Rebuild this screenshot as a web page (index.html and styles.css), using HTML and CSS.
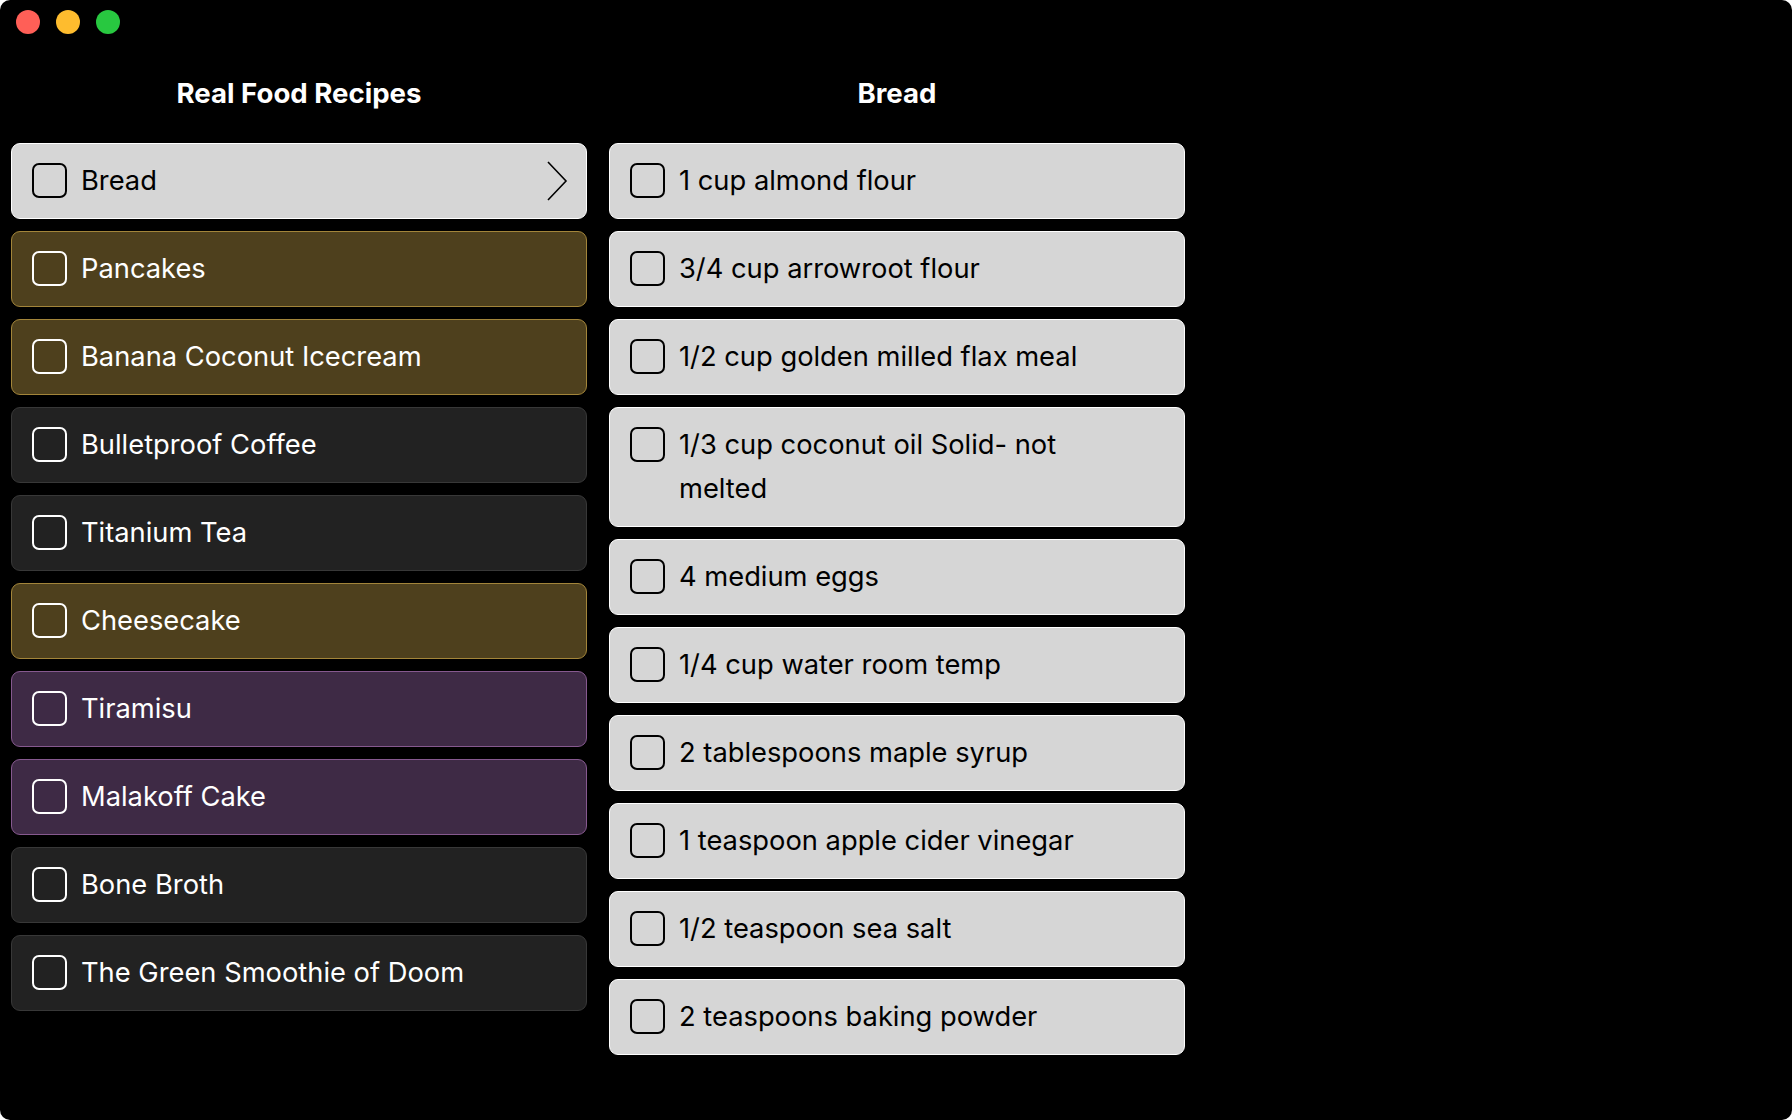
FILE: index.html
```html
<!DOCTYPE html>
<html lang="en">
<head>
    <meta charset="UTF-8">
    <meta name="viewport" content="width=device-width, initial-scale=1.0">
    <title>Real Food Recipes</title>
    <link rel="stylesheet" href="styles.css">
</head>
<body>
    <div class="window">
        <div class="titlebar">
            <span class="light light-red"></span>
            <span class="light light-yellow"></span>
            <span class="light light-green"></span>
        </div>
        <div class="columns">
            <section class="column">
                <h2 class="column-title">Real Food Recipes</h2>
                <ul class="list">
                    <li class="item item-light">
                        <span class="check"></span>
                        <span class="label">Bread</span>
                        <svg class="chevron" width="22" height="40" viewBox="0 0 22 40"><path d="M2 1 L20 20 L2 39" fill="none" stroke="#000" stroke-width="1.6"/></svg>
                    </li>
                    <li class="item item-gold"><span class="check"></span><span class="label">Pancakes</span></li>
                    <li class="item item-gold"><span class="check"></span><span class="label">Banana Coconut Icecream</span></li>
                    <li class="item item-dark"><span class="check"></span><span class="label">Bulletproof Coffee</span></li>
                    <li class="item item-dark"><span class="check"></span><span class="label">Titanium Tea</span></li>
                    <li class="item item-gold"><span class="check"></span><span class="label">Cheesecake</span></li>
                    <li class="item item-purple"><span class="check"></span><span class="label">Tiramisu</span></li>
                    <li class="item item-purple"><span class="check"></span><span class="label">Malakoff Cake</span></li>
                    <li class="item item-dark"><span class="check"></span><span class="label">Bone Broth</span></li>
                    <li class="item item-dark"><span class="check"></span><span class="label">The Green Smoothie of Doom</span></li>
                </ul>
            </section>
            <section class="column">
                <h2 class="column-title">Bread</h2>
                <ul class="list">
                    <li class="item item-light"><span class="check"></span><span class="label">1 cup almond flour</span></li>
                    <li class="item item-light"><span class="check"></span><span class="label">3/4 cup arrowroot flour</span></li>
                    <li class="item item-light"><span class="check"></span><span class="label">1/2 cup golden milled flax meal</span></li>
                    <li class="item item-light"><span class="check"></span><span class="label label-wrap">1/3 cup coconut oil Solid- not melted</span></li>
                    <li class="item item-light"><span class="check"></span><span class="label">4 medium eggs</span></li>
                    <li class="item item-light"><span class="check"></span><span class="label">1/4 cup water room temp</span></li>
                    <li class="item item-light"><span class="check"></span><span class="label">2 tablespoons maple syrup</span></li>
                    <li class="item item-light"><span class="check"></span><span class="label">1 teaspoon apple cider vinegar</span></li>
                    <li class="item item-light"><span class="check"></span><span class="label">1/2 teaspoon sea salt</span></li>
                    <li class="item item-light"><span class="check"></span><span class="label">2 teaspoons baking powder</span></li>
                </ul>
            </section>
        </div>
    </div>
</body>
</html>
```

FILE: styles.css
```css
html, body {
    margin: 0;
    padding: 0;
    background: #fff;
}
body {
    font-family: Inter, "Noto Sans", sans-serif;
}
.window {
    width: 1792px;
    height: 1120px;
    background: #000;
    border-radius: 10px;
    overflow: hidden;
}
.titlebar {
    height: 44px;
    display: flex;
    align-items: center;
    gap: 16px;
    padding-left: 16px;
}
.light {
    width: 24px;
    height: 24px;
    border-radius: 50%;
}
.light-red { background: #ff5f57; }
.light-yellow { background: #febc2e; }
.light-green { background: #28c840; }

.columns {
    display: flex;
    gap: 22px;
    padding-left: 11px;
}
.column {
    width: 576px;
}
.column-title {
    margin: 27px 0 28px;
    line-height: 44px;
    font-size: 27.6px;
    font-weight: 700;
    color: #fff;
    text-align: center;
}
.list {
    list-style: none;
    margin: 0;
    padding: 0;
    display: flex;
    flex-direction: column;
    gap: 12px;
}
.item {
    display: flex;
    align-items: flex-start;
    padding: 15px 20px;
    border: 1px solid transparent;
    border-radius: 9px;
    font-size: 27.3px;
    line-height: 44px;
    color: #fff;
}
.check {
    flex: none;
    box-sizing: border-box;
    width: 35px;
    height: 35px;
    margin: 4px 14px 0 0;
    border: 2px solid #fff;
    border-radius: 7px;
}
.label {
    flex: 1;
}
.label-wrap {
    padding-right: 90px;
}
.chevron {
    align-self: center;
    margin-right: -2px;
}
.item-light {
    background: #d6d6d6;
    border-color: #fff;
    color: #000;
}
.item-light .check {
    border-color: #000;
}
.item-gold {
    background: #4e401d;
    border-color: #a3853a;
}
.item-purple {
    background: #3e2a45;
    border-color: #86598f;
}
.item-dark {
    background: #222;
    border-color: #383838;
}
```
